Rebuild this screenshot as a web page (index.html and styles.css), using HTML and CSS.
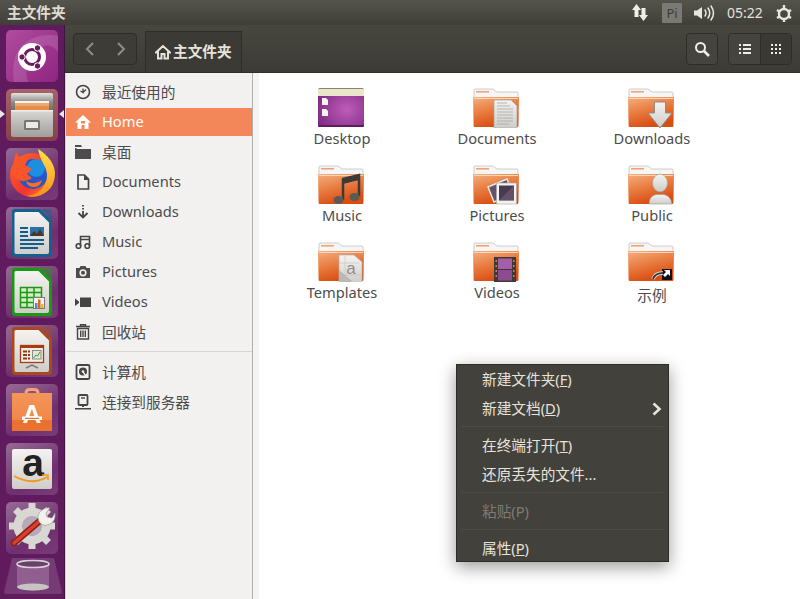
FILE: index.html
```html
<!DOCTYPE html>
<html lang="zh">
<head>
<meta charset="utf-8">
<title>主文件夹</title>
<link rel="stylesheet" href="styles.css">
</head>
<body>
<svg class="defs" aria-hidden="true">
  <defs>
    <linearGradient id="fbody" x1="0" y1="0" x2=".4" y2="1"><stop offset="0" stop-color="#f5b083"/><stop offset=".45" stop-color="#ea8246"/><stop offset="1" stop-color="#d94c12"/></linearGradient>
    <linearGradient id="grey" x1="0" y1="0" x2="0" y2="1"><stop offset="0" stop-color="#f4f3f1"/><stop offset="1" stop-color="#cfcdc9"/></linearGradient>
    <linearGradient id="ff" x1="0" y1="0" x2="1" y2="1"><stop offset="0" stop-color="#f9672a"/><stop offset=".6" stop-color="#f5332f"/><stop offset="1" stop-color="#fb9a1c"/></linearGradient>
    <linearGradient id="ffy" x1="0" y1="0" x2="0" y2="1"><stop offset="0" stop-color="#ffe34d"/><stop offset="1" stop-color="#fb8f1c"/></linearGradient>
    <radialGradient id="purple" cx=".62" cy=".55" r=".7"><stop offset="0" stop-color="#bf5cb9"/><stop offset="1" stop-color="#7d2a82"/></radialGradient>
    <linearGradient id="bag" x1="0" y1="0" x2="0" y2="1"><stop offset="0" stop-color="#f4965a"/><stop offset="1" stop-color="#ef8040"/></linearGradient>
    <linearGradient id="cab" x1="0" y1="0" x2="0" y2="1"><stop offset="0" stop-color="#d9d8d4"/><stop offset="1" stop-color="#a09e99"/></linearGradient>
    <linearGradient id="cabtop" x1="0" y1="0" x2="0" y2="1"><stop offset="0" stop-color="#e4e3e0"/><stop offset=".5" stop-color="#8f8d89"/><stop offset="1" stop-color="#6c6a66"/></linearGradient>
    <symbol id="folder" viewBox="0 0 48 40">
      <path d="M1 10V2q0-1 1-1h18l4 3h20q1 0 1 1v5z" fill="#f7f6f4" stroke="#c4c2bf" stroke-width=".8"/>
      <rect x="3" y="3" width="13" height="1.6" fill="#f0a476"/>
      <path d="M0 10q0-1 1-1h44q1 0 1 1l-.6 28q0 1-1 1H1.6q-1 0-1-1z" fill="url(#fbody)"/>
      <path d="M1 10h44v1H1z" fill="#fbd7b8"/>
    </symbol>
    <symbol id="lodoc" viewBox="0 0 52 52">
      <path d="M9 2h25l12 12v33q0 3-3 3H9q-3 0-3-3V5q0-3 3-3z" fill="currentColor"/>
      <path d="M35 2h8q3 0 3 3v8z" fill="currentColor" opacity=".55"/>
      <path d="M10 5h22.500L43 15.500V45q0 2-2 2H10q-1.500 0-1.500-2V6.500Q8.500 5 10 5z" fill="url(#grey)"/>
    </symbol>
  </defs>
</svg>

<header class="panel">
  <div class="panel-title">主文件夹</div>
  <div class="indicators">
    <svg class="ind-net" width="16" height="18" viewBox="0 0 16 18"><path d="M4.500 0L9 6H6.500v7h-4V6H0z" fill="#f0eee8"/><path d="M11.500 17L7 11h2.500V4h4v7H16z" fill="#f0eee8"/></svg>
    <div class="ind-pi">Pi</div>
    <svg class="ind-vol" width="21" height="16" viewBox="0 0 21 16"><path d="M0 5.500h3L8 2v12L3 10.500H0z" fill="#e8e6df"/><path d="M11 5q2 3 0 6M14 3q3.500 5 0 10M17 1q5 7 0 14" fill="none" stroke="#e8e6df" stroke-width="1.500" stroke-linecap="round"/></svg>
    <div class="ind-time">05:22</div>
    <svg class="ind-gear" width="16" height="18" viewBox="0 0 16 18"><g fill="none" stroke="#e8e6df"><circle cx="8" cy="10" r="5" stroke-width="2.400"/><path d="M8 1v4M1 6l2.500 1.500M15 6l-2.500 1.500M1 14l2.500-1.500M15 14l-2.500-1.500M8 15v3" stroke-width="2.400"/></g></svg>
  </div>
</header>

<div class="desktop">
  <nav class="launcher">
    <div class="tile tile-dash">
      <svg width="52" height="52" viewBox="0 0 52 52">
        <path d="M52 6Q32 2 18 14T8 52h14Q16 30 30 20T52 22z" fill="#fff" opacity=".13"/>
        <circle cx="26" cy="27" r="14" fill="#fff"/>
        <circle cx="26" cy="27" r="7.500" fill="none" stroke="#6d1b5f" stroke-width="3"/>
        <g fill="#6d1b5f" stroke="#fff" stroke-width="1"><circle cx="16" cy="27" r="3.200"/><circle cx="31.500" cy="18" r="3.200"/><circle cx="31.500" cy="36" r="3.200"/></g>
      </svg>
    </div>
    <div class="tile tile-active">
      <svg width="52" height="52" viewBox="0 0 52 52">
        <rect x="5" y="4" width="42" height="18" rx="2" fill="url(#cabtop)"/>
        <rect x="9" y="12" width="34" height="2" fill="#f7f5f0"/>
        <rect x="9" y="14" width="34" height="3" fill="#eea76d"/>
        <rect x="9" y="17" width="34" height="5" fill="#e98c4a"/>
        <path d="M5 21h42v25q0 2-2 2H7q-2 0-2-2z" fill="url(#cab)"/>
        <rect x="5" y="21" width="42" height="1.500" fill="#eeedea"/>
        <rect x="18" y="31" width="16" height="10" rx="1.500" fill="#77756f"/>
        <rect x="20" y="33" width="12" height="6" fill="#eceae6"/>
      </svg>
      <span class="pip pip-left"></span><span class="pip pip-right"></span>
    </div>
    <div class="tile">
      <svg width="52" height="52" viewBox="0 0 52 52">
        <circle cx="26" cy="27" r="22" fill="url(#ff)"/>
        <circle cx="27" cy="26" r="15" fill="#2a55c9"/>
        <circle cx="30" cy="20" r="9" fill="#1d8fe0"/>
        <path d="M7 16L10 4l5 7 8-1-4 7 7 4-5 5 5 4q-8 6-15 1Q4 26 7 16z" fill="#f9552a"/>
        <path d="M32 1q16 10 17 24 0 16-14 22-8 3-14 1 12-1 18-12 5-10-2-21-3-5-5-14z" fill="url(#ffy)"/>
        <path d="M20 33q8 5 16-1-2 8-10 7-5-1-6-6z" fill="#fa6e22"/>
      </svg>
    </div>
    <div class="tile">
      <svg width="52" height="52" viewBox="0 0 52 52" class="lo-writer">
        <use href="#lodoc" width="52" height="52"/>
        <path d="M14 21h8M14 25h8M14 29h8M14 33h24M14 37h24M14 41h18" stroke="#135e8d" stroke-width="2"/>
        <rect x="24" y="20" width="14" height="9" fill="#2f6fa8"/>
        <path d="M24 29l4-5 3 3 3-5 4 7z" fill="#473a25"/>
      </svg>
    </div>
    <div class="tile">
      <svg width="52" height="52" viewBox="0 0 52 52" class="lo-calc">
        <use href="#lodoc" width="52" height="52"/>
        <path d="M14.500 21.500h21v20h-21zM14.500 26.500h21M14.500 31.500h21M14.500 36.500h21M21 21.500v20M28 21.500v20" fill="#d6ecc8" stroke="#189a12" stroke-width="1.500"/>
        <rect x="27.500" y="31.500" width="11" height="11" fill="#f2f1ef" stroke="#7a7a78"/>
        <rect x="29" y="37" width="2.500" height="5" fill="#3c8fd0"/><rect x="32" y="33.500" width="2.500" height="8.500" fill="#e4641e"/><rect x="35" y="38" width="2.500" height="4" fill="#f0b72c"/>
      </svg>
    </div>
    <div class="tile">
      <svg width="52" height="52" viewBox="0 0 52 52" class="lo-impress">
        <use href="#lodoc" width="52" height="52"/>
        <rect x="14.500" y="20.500" width="23" height="17" fill="#f1ede6" stroke="#a33d12" stroke-width="1.300"/>
        <rect x="14" y="20" width="24" height="3" fill="#a33d12"/>
        <path d="M17 26.500h4M17 30h4M17 33.500h4M22 26.500h2M22 30h2M22 33.500h2" stroke="#8d3a12" stroke-width="2"/>
        <rect x="26.500" y="25.500" width="8.500" height="8.500" fill="#dfe9d8" stroke="#8a8a86"/>
        <path d="M27.500 33l2.500-3 1.500 1 2.500-4" fill="none" stroke="#3f9a2c"/>
        <path d="M20 43l6-3 6 3" fill="none" stroke="#777" stroke-width="1.500"/>
      </svg>
    </div>
    <div class="tile">
      <svg width="52" height="52" viewBox="0 0 52 52">
        <path d="M20 12V9q0-3.500 4-3.500h4q4 0 4 3.500v3" fill="none" stroke="#f3a478" stroke-width="3"/>
        <path d="M6 9h40v38H6z" fill="url(#bag)"/>
        <rect x="6" y="36" width="40" height="11" fill="#ea7230"/>
        <text class="bag-letter" x="26" y="39" text-anchor="middle">A</text>
        <rect x="16" y="32.500" width="20" height="3.500" fill="#fff"/>
        <rect x="19" y="33.800" width="14" height="1.200" fill="#ea7230"/>
      </svg>
    </div>
    <div class="tile">
      <svg width="52" height="52" viewBox="0 0 52 52">
        <rect x="6" y="6" width="40" height="40" rx="2" fill="url(#grey)"/>
        <text class="amazon-letter" x="27" y="33" text-anchor="middle">a</text>
        <path d="M8 33q18 10 33 1" fill="none" stroke="#f39a1e" stroke-width="2"/>
        <path d="M36 32h6v5" fill="none" stroke="#f39a1e" stroke-width="1.600"/>
      </svg>
    </div>
    <div class="tile">
      <svg width="52" height="52" viewBox="0 0 52 52">
        <g fill="none" stroke="#d8d7d4"><circle cx="26" cy="24" r="14" stroke-width="9"/><path d="M26 1v7M26 40v7M3 24h7M42 24h7M9.500 7.500l5 5M37.500 35.500l5 5M9.500 40.500l5-5M37.500 12.500l5-5" stroke-width="7"/></g>
        <circle cx="26" cy="24" r="10" fill="#b9a9b8"/>
        <path d="M8 41L36 17" stroke="#8f1f14" stroke-width="6.500" stroke-linecap="round"/>
        <path d="M8 41L36 17" stroke="#d9402c" stroke-width="3.500" stroke-linecap="round"/>
        <path d="M33 11q5-6 11-5l-4 5 1 4 5 1 3-5q1 8-5 11-5 3-9 0-5-5-2-11z" fill="#f2f1ef" stroke="#8c8a86" stroke-width=".6"/>
      </svg>
    </div>
    <div class="tile-trash">
      <svg width="60" height="38" viewBox="0 0 60 38">
        <path d="M9 1h42l8 34q0 2-2 2H3q-2 0-2-2z" fill="#fff" opacity=".14"/>
        <path d="M14 7v23q16 7 32 0V7z" fill="#9a6c98" opacity=".75"/>
        <ellipse cx="30" cy="7" rx="16" ry="3.500" fill="#6b3f6c" stroke="#d4d3d0" stroke-width="1.600"/>
        <ellipse cx="30" cy="30" rx="16" ry="3.500" fill="#c7c5c3"/>
      </svg>
    </div>
  </nav>

  <main class="window">
    <div class="toolbar">
      <div class="btn-group">
        <button class="tool tool-nav"><svg width="10" height="14" viewBox="0 0 10 14"><path d="M8 1L2 7l6 6" fill="none" stroke="#8e8d87" stroke-width="2"/></svg></button>
        <button class="tool tool-nav"><svg width="10" height="14" viewBox="0 0 10 14"><path d="M2 1l6 6-6 6" fill="none" stroke="#8e8d87" stroke-width="2"/></svg></button>
      </div>
      <div class="pathbar">
        <svg width="16" height="16" viewBox="0 0 16 16"><path d="M8 2L1 8.500h2v6h3.500V10h3v4.500H13v-6h2z" fill="none" stroke="#e6e3dc" stroke-width="2"/></svg>
        <span>主文件夹</span>
      </div>
      <div class="spacer"></div>
      <button class="tool tool-search"><svg width="16" height="16" viewBox="0 0 16 16"><circle cx="6.500" cy="6.500" r="4.500" fill="none" stroke="#f0eee8" stroke-width="2"/><path d="M10 10l5 5" stroke="#f0eee8" stroke-width="2.600"/></svg></button>
      <div class="btn-group btn-views">
        <button class="tool"><svg width="12" height="10" viewBox="0 0 12 10"><path d="M0 0h2v2H0zM4 0h8v2H4zM0 4h2v2H0zM4 4h8v2H4zM0 8h2v2H0zM4 8h8v2H4z" fill="#f0eee8"/></svg></button>
        <button class="tool tool-on"><svg width="10" height="10" viewBox="0 0 10 10"><path d="M0 0h2v2H0zM4 0h2v2H4zM8 0h2v2H8zM0 4h2v2H0zM4 4h2v2H4zM8 4h2v2H8zM0 8h2v2H0zM4 8h2v2H4zM8 8h2v2H8z" fill="#f0eee8"/></svg></button>
      </div>
    </div>

    <div class="content">
      <aside class="sidebar">
        <div class="place"><svg width="16" height="16" viewBox="0 0 16 16"><circle cx="8" cy="8" r="6.500" fill="none" stroke="#444" stroke-width="1.600"/><path d="M8 4.500V8.500L5.500 7M8 8.500l3-3" fill="none" stroke="#444" stroke-width="1.300"/></svg><span>最近使用的</span></div>
        <div class="place place-on place-latin"><svg width="16" height="16" viewBox="0 0 16 16"><path d="M8 1L0 8.500h2.500V15h4v-4h3v4h4V8.500H16z" fill="#fff"/><rect x="6" y="7" width="4" height="2.500" fill="#f4875a"/></svg><span>Home</span></div>
        <div class="place"><svg width="16" height="16" viewBox="0 0 16 16"><path d="M0 1h6l1 2H0zM0 4h16v11H0z" fill="#4c4c4c"/><path d="M0 4h1.500v11H0z" fill="#4c4c4c"/><path d="M1.500 4H16v1H1.500z" fill="#f2f1f0"/></svg><span>桌面</span></div>
        <div class="place place-latin"><svg width="16" height="16" viewBox="0 0 16 16"><path d="M3 1h6.500L13.500 5v10H3z" fill="none" stroke="#444" stroke-width="1.700"/><path d="M9 1v5h5z" fill="#444"/></svg><span>Documents</span></div>
        <div class="place place-latin"><svg width="16" height="16" viewBox="0 0 16 16"><path d="M8 1v1.500M8 4v1.500" stroke="#444" stroke-width="1.800"/><path d="M8 7v6M3.500 9L8 13.500 12.500 9" fill="none" stroke="#444" stroke-width="1.800"/></svg><span>Downloads</span></div>
        <div class="place place-latin"><svg width="16" height="16" viewBox="0 0 16 16"><path d="M5.500 12V2.500h9V12M5.500 5.500h9" fill="none" stroke="#444" stroke-width="1.600"/><circle cx="3.500" cy="12" r="2.300" fill="none" stroke="#444" stroke-width="1.600"/><circle cx="12.300" cy="12" r="2.300" fill="none" stroke="#444" stroke-width="1.600"/></svg><span>Music</span></div>
        <div class="place place-latin"><svg width="16" height="16" viewBox="0 0 16 16"><path d="M1 4h3.500l1-2h5l1 2H15v10H1z" fill="#4c4c4c"/><circle cx="8" cy="8.800" r="3.600" fill="#f2f1f0"/><circle cx="8" cy="8.800" r="2" fill="#4c4c4c"/></svg><span>Pictures</span></div>
        <div class="place place-latin"><svg width="16" height="16" viewBox="0 0 16 16"><path d="M5 3.500h11v9.500H5zM0 4.500l4 3v1.500l-4 3z" fill="#444"/></svg><span>Videos</span></div>
        <div class="place"><svg width="16" height="16" viewBox="0 0 16 16"><path d="M1 2.500h14M2.500 4.500h11v10.500h-11zM5.500 2V.8h5V2M5.700 6.500v6.500M8 6.500v6.500M10.300 6.500v6.500" fill="none" stroke="#444" stroke-width="1.400"/></svg><span>回收站</span></div>
        <div class="sep"></div>
        <div class="place"><svg width="16" height="16" viewBox="0 0 16 16"><rect x="1.500" y="1" width="13" height="14" rx="1.500" fill="none" stroke="#444" stroke-width="1.800"/><circle cx="8" cy="7.500" r="4" fill="#444"/><circle cx="8" cy="7.500" r="1.300" fill="#f2f1f0"/><path d="M8 8l3 4" stroke="#f2f1f0" stroke-width="1.300"/></svg><span>计算机</span></div>
        <div class="place"><svg width="16" height="16" viewBox="0 0 16 16"><rect x="3.500" y="1" width="9" height="10" rx="1" fill="none" stroke="#444" stroke-width="1.800"/><path d="M6 4h4" stroke="#444" stroke-width="1.400"/><path d="M7 11h2v2H7zM0 14h16v1.600H0z" fill="#444"/></svg><span>连接到服务器</span></div>
      </aside>

      <div class="gutter"></div>

      <section class="files">
        <div class="file">
          <svg width="48" height="40" viewBox="0 0 48 40">
            <rect x="0" y="0" width="46" height="39" rx="2.500" fill="url(#purple)"/>
            <path d="M0 8V2.500Q0 0 2.500 0h41Q46 0 46 2.500V8z" fill="#eae6cb"/>
            <rect x="1" y="0" width="44" height="1" fill="#8a876f"/>
            <rect x="0" y="37" width="46" height="2" rx="1" fill="#5f1a60"/>
            <path d="M4 10h4l2 2v5H4zM4 21h4l2 2v5H4z" fill="#f5f4f0"/>
          </svg>
          <span class="file-name">Desktop</span>
        </div>
        <div class="file">
          <svg width="48" height="40" viewBox="0 0 48 40">
            <use href="#folder" width="48" height="40"/>
            <path d="M21 12h17l6 6v22H21z" fill="url(#grey)" stroke="#a9a7a3" stroke-width=".7"/>
            <path d="M24 15h10M24 18h13M24 21h16M24 24h16M24 27h16M24 30h16M24 33h16M24 36h12" stroke="#aaa8a3" stroke-width=".8"/>
          </svg>
          <span class="file-name">Documents</span>
        </div>
        <div class="file">
          <svg width="48" height="40" viewBox="0 0 48 40">
            <use href="#folder" width="48" height="40"/>
            <path d="M26.500 14h11v11H44L32 40 20 25h6.500z" fill="url(#grey)" stroke="#8e8c88"/>
          </svg>
          <span class="file-name">Downloads</span>
        </div>
        <div class="file">
          <svg width="48" height="40" viewBox="0 0 48 40">
            <use href="#folder" width="48" height="40"/>
            <path d="M25 35V14l16-4v21" fill="none" stroke="#3b3b39" stroke-width="2.500"/>
            <path d="M25 14l16-4v5l-16 4z" fill="#3b3b39"/>
            <ellipse cx="20.500" cy="35" rx="5" ry="4" fill="#5a5a57"/>
            <ellipse cx="36.500" cy="32" rx="5" ry="4" fill="#5a5a57"/>
          </svg>
          <span class="file-name">Music</span>
        </div>
        <div class="file">
          <svg width="48" height="40" viewBox="0 0 48 40">
            <use href="#folder" width="48" height="40"/>
            <path d="M15 22l19-8 6 15-19 8z" fill="#625468" stroke="#e8e7e4" stroke-width="1.500"/>
            <rect x="23.500" y="18" width="20" height="21" fill="#f4f3f1" stroke="#a8a6a2" stroke-width=".6"/>
            <rect x="26" y="20.500" width="15" height="15" fill="#4a3a50"/>
            <path d="M26 35.500L41 20.500v15z" fill="#7c6a7e" opacity=".5"/>
          </svg>
          <span class="file-name">Pictures</span>
        </div>
        <div class="file">
          <svg width="48" height="40" viewBox="0 0 48 40">
            <use href="#folder" width="48" height="40"/>
            <ellipse cx="32" cy="18" rx="7.500" ry="9" fill="url(#grey)" stroke="#9b9995" stroke-width=".6"/>
            <path d="M21 39q0-8 7-9.500h8Q43 31 44 39z" fill="url(#grey)" stroke="#9b9995" stroke-width=".6"/>
          </svg>
          <span class="file-name">Public</span>
        </div>
        <div class="file">
          <svg width="48" height="40" viewBox="0 0 48 40">
            <use href="#folder" width="48" height="40"/>
            <path d="M21 13h15l8 7v21H21z" fill="url(#grey)" stroke="#b5b3af" stroke-width=".7"/>
            <text class="tpl-letter" x="33" y="32" text-anchor="middle">a</text>
            <path d="M27 14v26M41 21H21M21 33h23" stroke="#c4c2bf" stroke-width=".6"/>
            <path d="M21 28l14 12H21z" fill="#bab8b6"/>
          </svg>
          <span class="file-name">Templates</span>
        </div>
        <div class="file">
          <svg width="48" height="40" viewBox="0 0 48 40">
            <use href="#folder" width="48" height="40"/>
            <rect x="21" y="15" width="22" height="25" fill="#3c3a38"/>
            <rect x="25" y="16.500" width="14" height="10.500" fill="#a55fa6"/>
            <rect x="25" y="28" width="14" height="10.500" fill="#8e4c90"/>
            <path d="M22.500 18h1.500v2h-1.500zM22.500 23h1.500v2h-1.500zM22.500 28h1.500v2h-1.500zM22.500 33h1.500v2h-1.500zM40 18h1.500v2H40zM40 23h1.500v2H40zM40 28h1.500v2H40zM40 33h1.500v2H40z" fill="#c97f4a"/>
          </svg>
          <span class="file-name">Videos</span>
        </div>
        <div class="file">
          <svg width="48" height="40" viewBox="0 0 48 40">
            <use href="#folder" width="48" height="40"/>
            <rect x="34" y="27" width="10" height="11" fill="#111"/>
            <path d="M25 37q2-6 10-6" fill="none" stroke="#eee" stroke-width="3.400"/>
            <path d="M25 37q2-6 10-6" fill="none" stroke="#3a3a38" stroke-width="2"/>
            <path d="M36 28h6v6l-2-2-3 3-2-2 3-3z" fill="#fff"/>
          </svg>
          <span class="file-name file-name-cjk">示例</span>
        </div>
      </section>
    </div>
  </main>
</div>

<div class="menu">
  <div class="menu-item"><span>新建文件夹(<u>F</u>)</span></div>
  <div class="menu-item"><span>新建文档(<u>D</u>)</span><svg width="10" height="14" viewBox="0 0 10 14"><path d="M1.500 1.500L7.500 7l-6 5.500" fill="none" stroke="#e6e3dc" stroke-width="2.600"/></svg></div>
  <div class="menu-sep"></div>
  <div class="menu-item"><span>在终端打开(<u>T</u>)</span></div>
  <div class="menu-item"><span>还原丢失的文件...</span></div>
  <div class="menu-sep"></div>
  <div class="menu-item menu-off"><span>粘贴(P)</span></div>
  <div class="menu-sep"></div>
  <div class="menu-item"><span>属性(<u>P</u>)</span></div>
</div>
</body>
</html>
```

FILE: styles.css
```css
* { box-sizing: border-box; }

html, body { height: 100%; }

body {
  margin: 0;
  height: 599px;
  overflow: hidden;
  display: flex;
  flex-direction: column;
  background: #fff;
  font-family: "Noto Sans", "Noto Sans CJK SC", sans-serif;
  font-size: 14px;
  color: #4c4c4c;
}

.defs { position: absolute; width: 0; height: 0; }

svg { display: block; flex: none; }

.panel {
  height: 25px;
  flex: none;
  display: flex;
  align-items: center;
  justify-content: space-between;
  padding-left: 7px;
  background: linear-gradient(#55544c, #3f3e38);
  color: #dfdbd2;
}

.panel-title { font-size: 14.67px; font-weight: 700; line-height: 25px; }

.indicators { display: flex; align-items: center; padding-right: 8px; }

.ind-net { margin-right: 14px; }

.ind-pi {
  width: 20px;
  height: 20px;
  margin-right: 12px;
  background: #7a7973;
  border-radius: 1px;
  color: #3d3c37;
  font-size: 13px;
  line-height: 20px;
  text-align: center;
}

.ind-vol { margin-right: 12px; }

.ind-time { width: 37px; margin-right: 12px; font-size: 14px; color: #e4e2dc; white-space: nowrap; }

.desktop { flex: 1; display: flex; min-height: 0; }

.launcher {
  width: 65px;
  flex: none;
  padding: 5px 0 0 6px;
  display: flex;
  flex-direction: column;
  gap: 7px;
  background: #601a5e;
  border-right: 1px solid #3f1440;
}

.tile {
  position: relative;
  width: 52px;
  height: 52px;
  flex: none;
  border-radius: 5px;
  background: linear-gradient(150deg, #966b94, #6f2f6e 65%, #7a3d78);
}

.tile-dash { background: linear-gradient(135deg, #b04c9f, #8f2480); overflow: hidden; }

.tile-active { background: linear-gradient(#a5636b, #85404a); }

.lo-writer { color: #14608f; }
.lo-calc { color: #189a12; }
.lo-impress { color: #a8491f; }

.bag-letter { font: 700 26px "Liberation Sans", sans-serif; fill: #fff; }
.amazon-letter { font: 700 39px "Liberation Sans", sans-serif; fill: #222; }
.tpl-letter { font: 400 17px "Liberation Sans", sans-serif; fill: #8f8d8a; }

.tile-trash { width: 60px; height: 38px; margin: -4px 0 0 -3px; flex: none; }

.pip {
  position: absolute;
  top: 21px;
  width: 0;
  height: 0;
  border-top: 4px solid transparent;
  border-bottom: 4px solid transparent;
}
.pip-left { left: -6px; border-left: 5px solid #e9e8e6; }
.pip-right { right: -6px; border-right: 5px solid #e9e8e6; }

.window { flex: 1; min-width: 0; display: flex; flex-direction: column; }

.toolbar {
  height: 48px;
  flex: none;
  display: flex;
  align-items: center;
  padding: 0 8px;
  background: linear-gradient(#47463f, #3c3b35);
  border-bottom: 1px solid #2f2e2a;
}

.tool {
  width: 32px;
  height: 32px;
  padding: 0;
  display: flex;
  align-items: center;
  justify-content: center;
  background: transparent;
  border: 1px solid #2e2d29;
  border-radius: 4px;
}

.btn-group { display: flex; border: 1px solid #2e2d29; border-radius: 4px; height: 32px; background: #3d3c36; }
.btn-group .tool { width: 31px; height: 30px; border: 0; border-radius: 0; }
.btn-views { background: #45443e; }
.btn-views .tool-on { background: #3a3933; border-left: 1px solid #2e2d29; border-radius: 0 3px 3px 0; }

.pathbar {
  height: 41px;
  margin-left: 8px;
  padding: 0 9px 0 9px;
  display: flex;
  align-items: center;
  gap: 2px;
  background: #3b3a34;
  border: 1px solid #2e2d29;
  border-bottom: 0;
  color: #e6e3dc;
  font-size: 14.67px;
  font-weight: 700;
  align-self: flex-end;
}

.pathbar span { line-height: 22px; padding-bottom: 2px; }

.spacer { flex: 1; }

.tool-search { margin-right: 10px; background: #45443e; }

.content { flex: 1; display: flex; min-height: 0; }

.sidebar {
  width: 188px;
  flex: none;
  padding-top: 4px;
  background: #f2f1f0;
  border-left: 1px solid #d8d6d2;
  border-right: 1px solid #b3b1ac;
}

.place {
  height: 30px;
  display: flex;
  align-items: center;
  gap: 11px;
  padding-left: 9px;
  font-size: 14.67px;
  line-height: 22px;
  white-space: nowrap;
}

.place-latin span { padding-bottom: 2px; }

.place-on {
  height: 28px;
  margin: 1px 0;
  background: #f4875a;
  color: #fff;
}

.sep { height: 1px; margin: 4px 0 5px; background: #d8d6d2; }

.gutter { width: 6px; flex: none; background: #f5f4f3; }

.files {
  flex: 1;
  padding: 15px 0 0 6px;
  display: grid;
  grid-template-columns: repeat(3, 154px);
  grid-auto-rows: 77px;
  column-gap: 1px;
  align-content: start;
}

.file { display: flex; flex-direction: column; align-items: center; }

.file svg { align-self: center; }

.file-name { font-size: 14.67px; line-height: 20px; white-space: nowrap; }

.file-name-cjk { margin-top: 3px; }

.menu {
  position: absolute;
  left: 456px;
  top: 364px;
  width: 213px;
  height: 198px;
  background: #43413b;
  border: 1px solid #2d2c28;
  color: #e6e3dc;
  box-shadow: 0 5px 16px rgba(0, 0, 0, .4);
  font-size: 14.67px;
}

.menu-item {
  height: 29px;
  padding: 0 6px 0 25px;
  display: flex;
  align-items: center;
  justify-content: space-between;
  line-height: 22px;
  white-space: nowrap;
}

.menu-item span { padding-bottom: 2px; }

.menu-off { color: #7d7b75; }

.menu-sep { height: 1px; margin: 3px 5px 4px; background: #4f4d47; }
```
